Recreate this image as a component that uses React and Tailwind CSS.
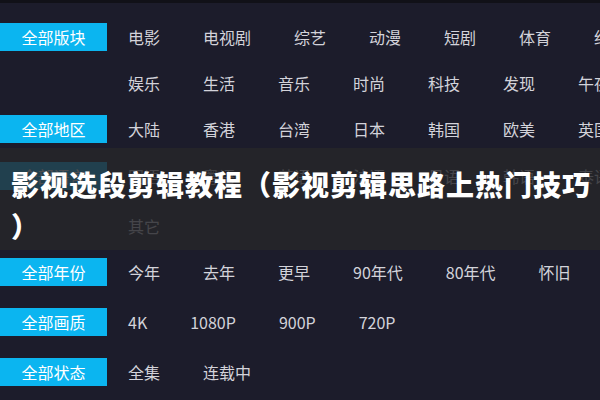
const groups = [
  {
    label: "全部版块",
    lines: [
      ["电影", "电视剧", "综艺", "动漫", "短剧", "体育", "纪录片"],
      ["娱乐", "生活", "音乐", "时尚", "科技", "发现", "午夜"],
    ],
    className: "",
  },
  {
    label: "全部地区",
    lines: [["大陆", "香港", "台湾", "日本", "韩国", "欧美", "英国"]],
    className: "",
  },
  {
    label: "全部语言",
    lines: [
      ["国语", "粤语", "英语", "法语", "日语", "韩语", "泰语"],
      ["其它"],
    ],
    className: "mt-[1px] flex flex-col gap-[4px]",
  },
  {
    label: "全部年份",
    lines: [["今年", "去年", "更早", "90年代", "80年代", "怀旧"]],
    className: "",
  },
  {
    label: "全部画质",
    lines: [["4K", "1080P", "900P", "720P"]],
    className: "mt-[4px]",
  },
  {
    label: "全部状态",
    lines: [["全集", "连载中"]],
    className: "mt-[4px]",
  },
];

const Line = ({ label, items }) => (
  <div className="flex h-[46px] items-center">
    {label ? (
      <div className="h-[28px] w-[107px] shrink-0 bg-[#0bb5f0] text-center text-[16px] leading-[28px] text-white">
        {label}
      </div>
    ) : (
      <div className="w-[107px] shrink-0" />
    )}
    <div className="ml-[21px] flex shrink-0 gap-x-[43px] whitespace-nowrap text-[16px] text-[#d3d3da]">
      {items.map((item) => (
        <span key={item}>{item}</span>
      ))}
    </div>
  </div>
);

export default function App() {
  return (
    <div className="relative h-[400px] w-[600px] overflow-hidden bg-[#1c1c2b] font-['Noto_Sans_CJK_SC',sans-serif]">
      <div className="h-[3px] bg-[#111118]" />
      <div className="pt-[11px]">
        {groups.map((group) => (
          <div key={group.label} className={group.className}>
            {group.lines.map((items, i) => (
              <Line
                key={i}
                label={i === 0 ? group.label : null}
                items={items}
              />
            ))}
          </div>
        ))}
      </div>

      {/* title banner over the filter list */}
      <div className="absolute left-0 right-0 top-[148px] h-[102px] bg-[rgba(38,38,41,0.82)] pl-[11px] pt-[15px]">
        <p className="text-[28px] font-black leading-[42px] tracking-[1px] text-white">
          影视选段剪辑教程（影视剪辑思路上热门技巧
          <br />）
        </p>
      </div>
    </div>
  );
}
